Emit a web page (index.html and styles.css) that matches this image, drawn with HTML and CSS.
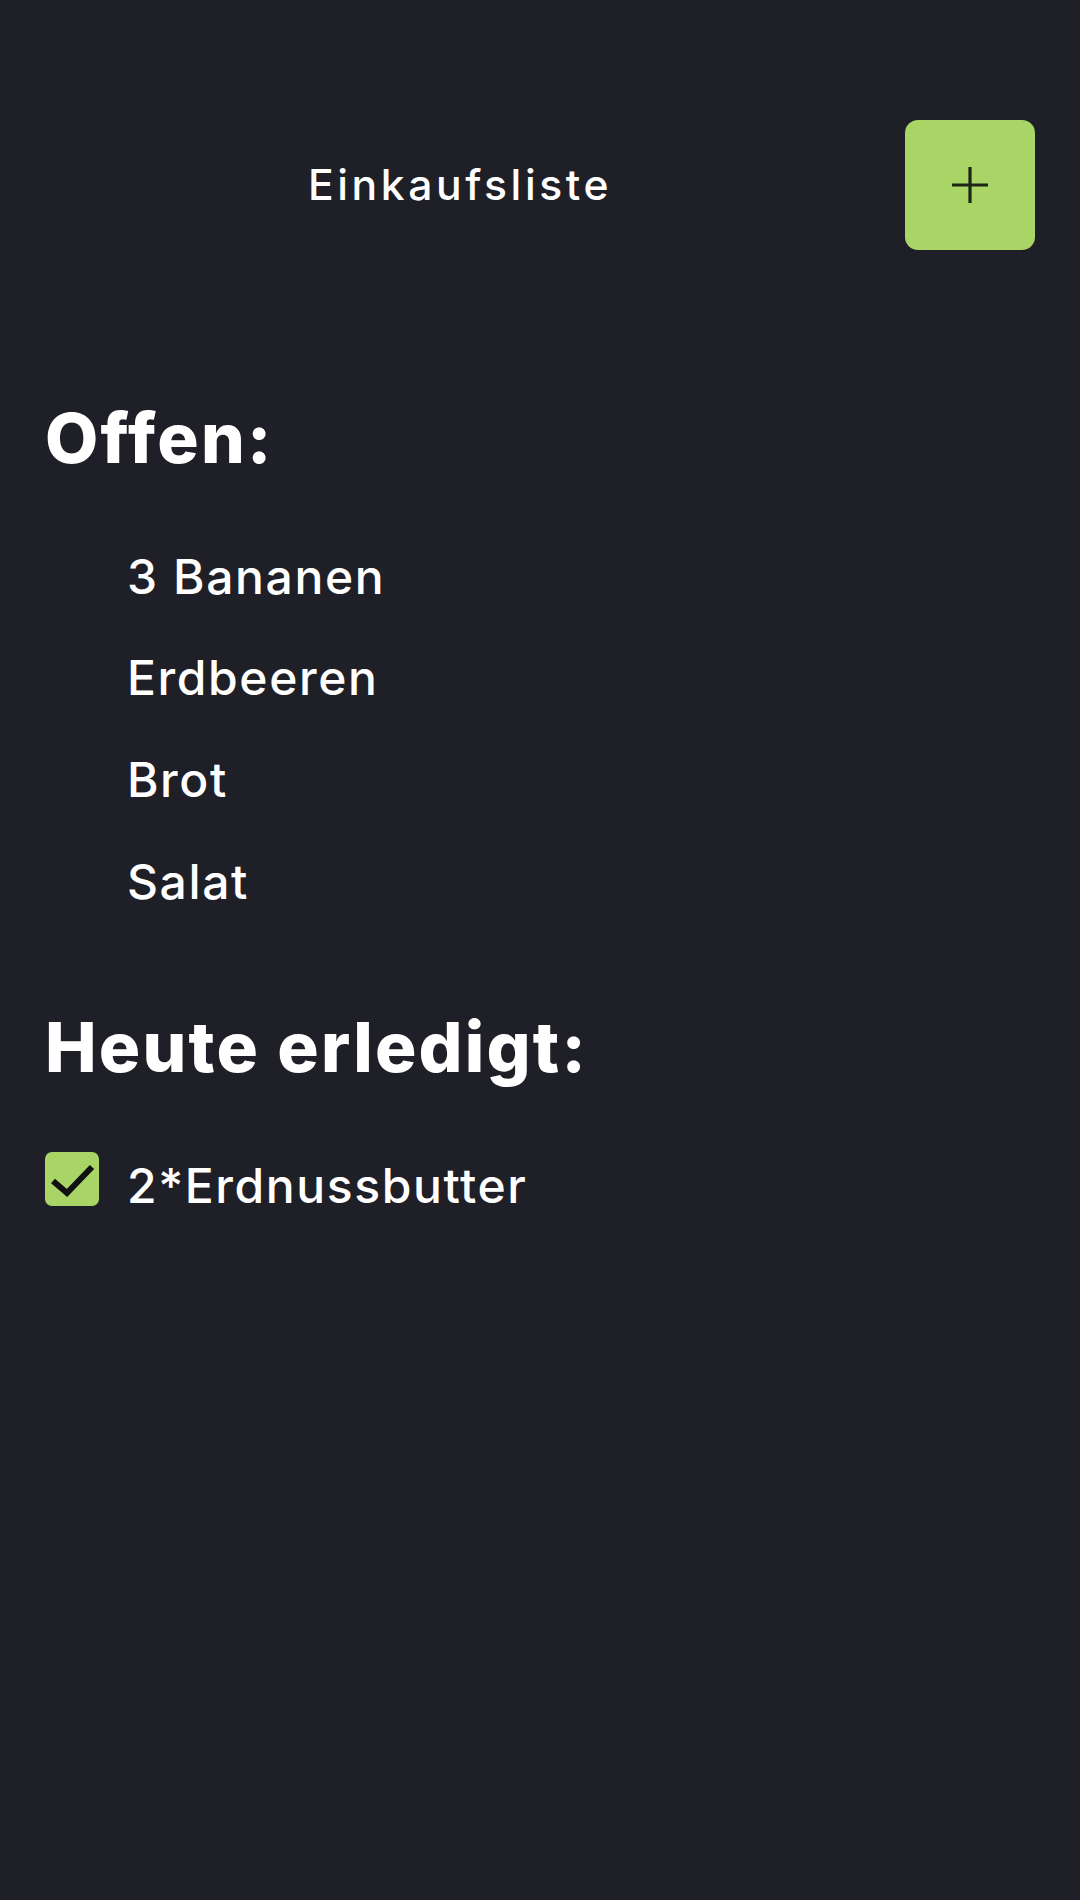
FILE: index.html
```html
<!DOCTYPE html>
<html lang="de">
<head>
<meta charset="utf-8">
<title>Einkaufsliste</title>
<link rel="stylesheet" href="styles.css">
</head>
<body>
<div class="app">
  <header class="topbar">
    <h1 class="title">Einkaufsliste</h1>
    <button class="add-btn" aria-label="Hinzufügen">
      <svg width="36" height="36" viewBox="0 0 36 36"><path d="M0 18H36M18 0V36" stroke="#1c2614" stroke-width="3.2" fill="none"/></svg>
    </button>
  </header>

  <section class="section">
    <h2 class="heading">Offen:</h2>
    <ul class="list">
      <li class="item"><span class="box"></span><span class="label">3 Bananen</span></li>
      <li class="item"><span class="box"></span><span class="label">Erdbeeren</span></li>
      <li class="item"><span class="box"></span><span class="label">Brot</span></li>
      <li class="item"><span class="box"></span><span class="label">Salat</span></li>
    </ul>
  </section>

  <section class="section">
    <h2 class="heading">Heute erledigt:</h2>
    <ul class="list">
      <li class="item"><span class="box checked"><svg width="54" height="54" viewBox="0 0 54 54"><path d="M8 29L22 41L47 15" stroke="#111111" stroke-width="6" fill="none"/></svg></span><span class="label">2*Erdnussbutter</span></li>
    </ul>
  </section>
</div>
</body>
</html>
```

FILE: styles.css
```css
html, body {
  margin: 0;
  padding: 0;
  background: #1f1f27;
}
body {
  font-family: Inter, "Noto Sans", sans-serif;
  color: #ffffff;
  min-height: 1900px;
}
.app {
  padding: 120px 45px 0 45px;
}
.topbar {
  display: flex;
  align-items: center;
  gap: 30px;
  height: 130px;
}
.title {
  flex: 1;
  margin: 0;
  text-align: center;
  font-size: 42.6px;
  font-weight: 500;
  letter-spacing: 3.6px;
  line-height: 1.2;
}
.add-btn {
  width: 130px;
  height: 130px;
  border: none;
  border-radius: 13px;
  background: #a9d566;
  display: flex;
  align-items: center;
  justify-content: center;
  padding: 0;
}
.add-btn svg { display: block; }
.section:first-of-type { margin-top: 147px; }
.section + .section { margin-top: 90px; }
.heading {
  margin: 0;
  font-size: 69px;
  font-weight: 800;
  letter-spacing: 2.2px;
  line-height: 82.8px;
}
.list {
  list-style: none;
  margin: 63px 0 0 0;
  padding: 0;
  display: flex;
  flex-direction: column;
  gap: 33.7px;
}
.item {
  display: flex;
  align-items: flex-start;
  gap: 28px;
}
.box {
  width: 54px;
  height: 54px;
  box-sizing: border-box;
  border: 2px solid transparent;
  border-radius: 7px;
  flex: none;
}
.box.checked {
  border: none;
  background: #a9d566;
}
.box svg { display: block; }
.label {
  font-size: 48px;
  line-height: 68px;
  font-weight: 500;
  letter-spacing: 1.6px;
}
```
